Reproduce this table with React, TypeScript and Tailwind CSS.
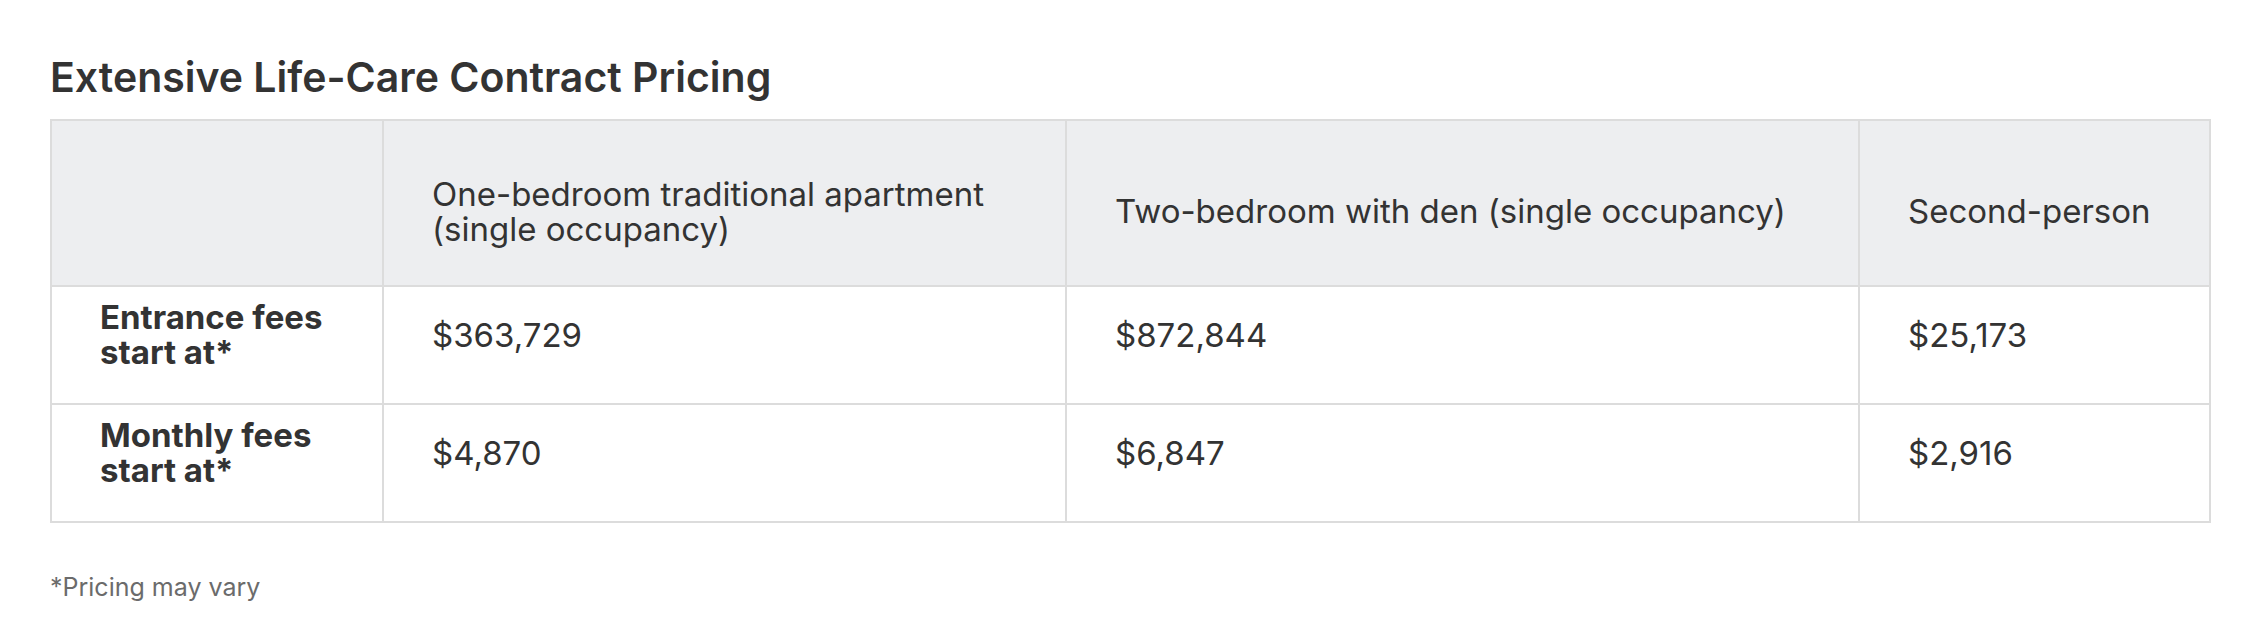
import React from "react";

const headers = [
  "",
  "One-bedroom traditional apartment (single occupancy)",
  "Two-bedroom with den (single occupancy)",
  "Second-person",
];

const rows = [
  { label: ["Entrance fees", "start at*"], values: ["$363,729", "$872,844", "$25,173"] },
  { label: ["Monthly fees", "start at*"], values: ["$4,870", "$6,847", "$2,916"] },
];

export default function App() {
  return (
    <div
      className="min-h-[644px] w-[2260px] bg-white pl-[50px] pt-[53px] text-[#333333]"
      style={{ fontFamily: "Inter, 'Open Sans', 'Liberation Sans', sans-serif" }}
    >
      <h1 className="text-[41px] font-semibold leading-[48px] text-[#333333]">
        Extensive Life-Care Contract Pricing
      </h1>
      <table className="mt-[18px] w-[2159px] table-fixed border-collapse border-2 border-[#dcdcdc]">
        <colgroup>
          <col className="w-[332px]" />
          <col className="w-[683px]" />
          <col className="w-[793px]" />
          <col className="w-[351px]" />
        </colgroup>
        <thead>
          <tr className="bg-[#edeef0]">
            {headers.map((h, i) => (
              <th
                key={i}
                className="h-[166px] border-2 border-[#dcdcdc] px-[48px] pt-[17px] text-left align-middle text-[33px] font-normal leading-[35px] text-[#333333]"
              >
                {i === 1 ? (
                  <>
                    One-bedroom traditional apartment
                    <br />
                    (single occupancy)
                  </>
                ) : (
                  h
                )}
              </th>
            ))}
          </tr>
        </thead>
        <tbody>
          {rows.map((r, ri) => (
            <tr key={ri}>
              <td className="h-[118px] border-2 border-[#dcdcdc] px-[48px] pb-[20px] align-middle text-[33px] font-bold leading-[35px] text-[#333333]">
                {r.label[0]}
                <br />
                {r.label[1]}
              </td>
              {r.values.map((v, vi) => (
                <td
                  key={vi}
                  className="h-[118px] border-2 border-[#dcdcdc] px-[48px] pb-[20px] align-middle text-[33px] font-normal leading-[35px] text-[#333333]"
                >
                  {v}
                </td>
              ))}
            </tr>
          ))}
        </tbody>
      </table>
      <p className="mt-[48px] text-[25px] leading-[32px] text-[#6b6b6b]">*Pricing may vary</p>
    </div>
  );
}
